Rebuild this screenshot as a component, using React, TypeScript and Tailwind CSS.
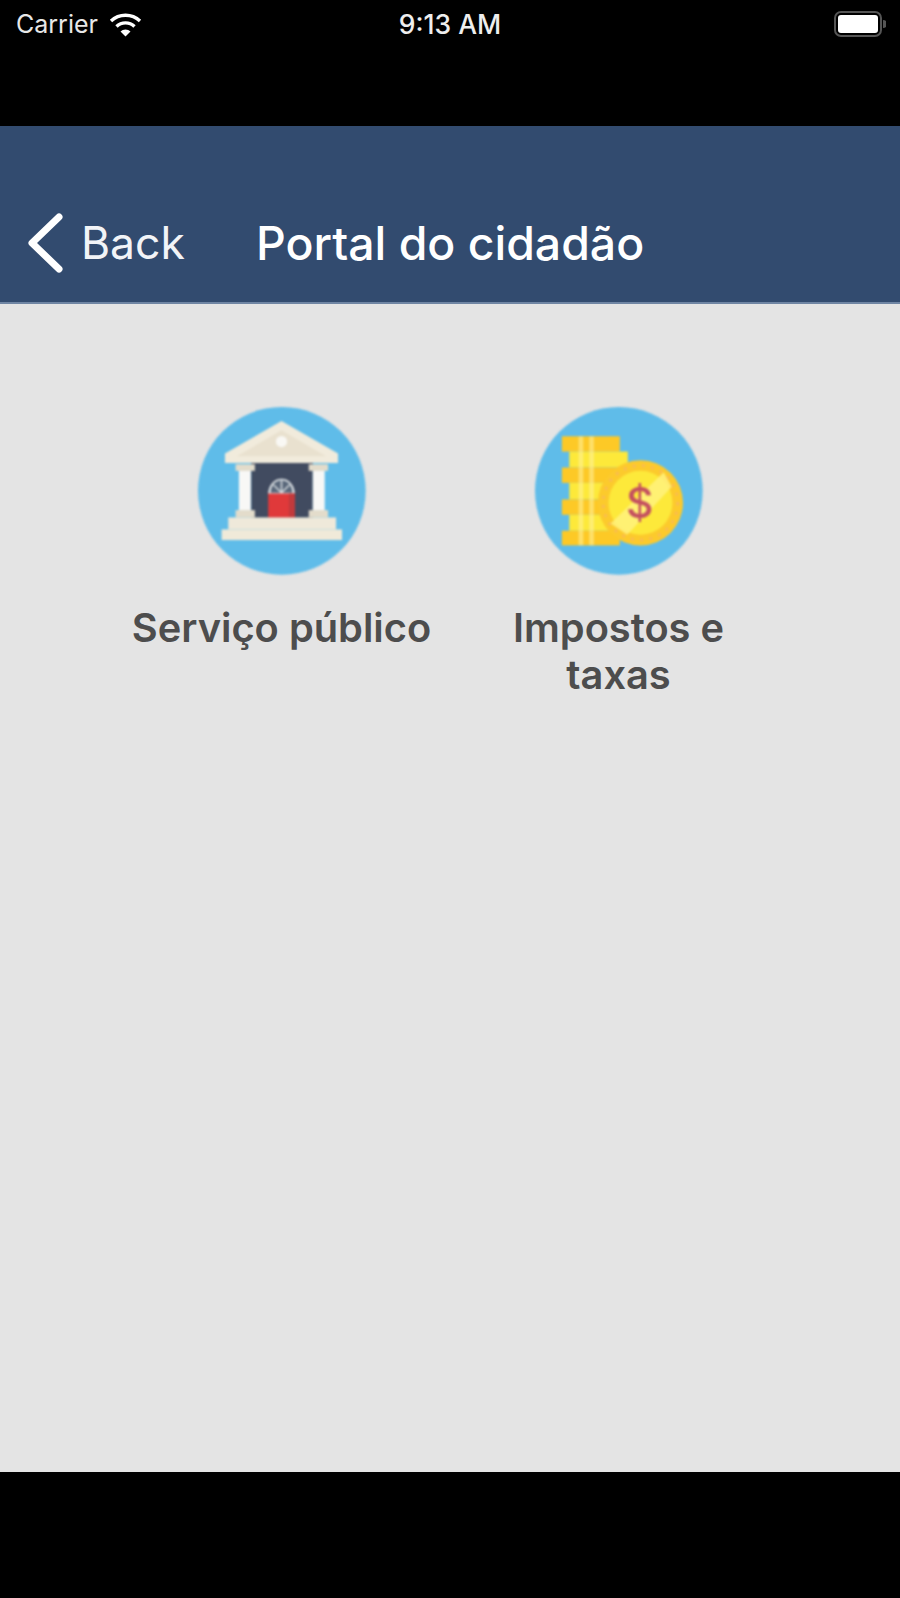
const BankIcon = () => (
  <svg viewBox="55 50 505 505" className="w-[168px] h-[168px] blur-[1px]">
    <circle cx="307" cy="302" r="252" fill="#5fbce9" />
    {/* wall and door */}
    <rect x="215" y="215" width="185" height="168" fill="#414b60" />
    <path d="M266 312 a40 46 0 0 1 80 0 Z" fill="#e3e8ea" />
    <path d="M273 308 a33 38 0 0 1 66 0 Z" fill="#59677a" />
    <path d="M306 270 v38 M306 308 L282 284 M306 308 L330 284" stroke="#e3e8ea" strokeWidth="4" />
    <rect x="266" y="310" width="80" height="73" fill="#e0393a" />
    <rect x="328" y="310" width="18" height="73" fill="#c23a3c" />
    {/* columns */}
    <rect x="178" y="240" width="36" height="122" fill="#f8f8f6" />
    <rect x="400" y="240" width="36" height="122" fill="#f8f8f6" />
    <rect x="168" y="222" width="58" height="20" fill="#e3dccb" />
    <rect x="388" y="222" width="58" height="20" fill="#e3dccb" />
    <rect x="168" y="360" width="58" height="22" fill="#e3dccb" />
    <rect x="388" y="360" width="58" height="22" fill="#e3dccb" />
    {/* roof */}
    <path d="M136 190 L306 92 L476 190 V218 H136 Z" fill="#f1ebdc" />
    <path d="M172 198 L306 120 L440 198 Z" fill="#e9e1cf" />
    <circle cx="306" cy="154" r="17" fill="#f9f8f4" />
    {/* steps */}
    <rect x="146" y="382" width="324" height="36" fill="#efe9da" />
    <rect x="126" y="418" width="362" height="32" fill="#f0ead9" />
  </svg>
)

const CoinsIcon = () => (
  <svg viewBox="45 50 505 505" className="w-[168px] h-[168px] blur-[1px]">
    <circle cx="297" cy="302" r="252" fill="#5fbce9" />
    {/* stack */}
    <rect x="126" y="138" width="174" height="46" fill="#fdc926" />
    <rect x="148" y="184" width="176" height="48" fill="#fde93a" />
    <rect x="126" y="232" width="174" height="46" fill="#fdc926" />
    <rect x="148" y="278" width="160" height="50" fill="#fde93a" />
    <rect x="126" y="328" width="174" height="46" fill="#fdc926" />
    <rect x="148" y="374" width="160" height="48" fill="#fde93a" />
    <rect x="126" y="422" width="174" height="44" fill="#fdc926" />
    <rect x="176" y="138" width="14" height="328" fill="#fff3a0" opacity="0.55" />
    <rect x="208" y="138" width="14" height="328" fill="#fff3a0" opacity="0.55" />
    {/* front coin */}
    <circle cx="362" cy="338" r="128" fill="#fcca2c" />
    <circle cx="362" cy="338" r="112" fill="none" stroke="#f9b95a" strokeWidth="8" strokeDasharray="8 20" />
    <circle cx="362" cy="338" r="96" fill="#fde93a" />
    <path d="M272 400 L432 246 L456 290 L322 434 Z" fill="#fff27e" opacity="0.85" />
    <text x="360" y="384" textAnchor="middle" fontFamily="Inter, sans-serif" fontWeight="500" fontSize="128" fill="#c4505f">$</text>
  </svg>
)

const Tile = ({ label, icon }: { label: string; icon: React.ReactNode }) => (
  <div className="w-[337px] px-[14px] flex flex-col items-center">
    {icon}
    <p className="mt-[29px] text-center text-[39.8px] leading-[47px] font-semibold text-[#4d4d4d]">{label}</p>
  </div>
)

export default function App() {
  return (
    <div className="w-full h-[1598px] flex flex-col bg-black font-['Inter',sans-serif]">
      {/* status bar */}
      <div className="h-[126px] px-4 pt-[8px] text-white">
        <div className="grid grid-cols-3 items-center h-[32px]">
          <div className="flex items-center gap-[11px]">
            <span className="text-[25px] leading-[32px] text-[#e8e8e8]">Carrier</span>
            <svg viewBox="0 0 33 25" className="w-[33px] h-[25px]" fill="none" stroke="#fff" strokeWidth="3.4">
              <path d="M2 9 a21 21 0 0 1 29 0" />
              <path d="M7.5 14.5 a13 13 0 0 1 18 0" />
              <path d="M16.5 24.5 L11.5 19.5 a7 7 0 0 1 10 0 Z" fill="#fff" stroke="none" />
            </svg>
          </div>
          <div className="text-center text-[26.5px] leading-[32px] font-medium text-[#eeeeee]">9:13 AM</div>
          <div className="flex justify-end">
            <svg viewBox="0 0 52 26" className="w-[52px] h-[26px] -mr-[2px]">
              <rect x="1" y="1" width="46" height="24" rx="6" fill="none" stroke="#555" strokeWidth="2" />
              <rect x="4" y="4" width="40" height="18" rx="3" fill="#fff" />
              <path d="M49 9 a4 4 0 0 1 0 8 Z" fill="#555" />
            </svg>
          </div>
        </div>
      </div>

      {/* nav bar */}
      <div className="h-[178px] bg-[#324b6f] border-b-2 border-[#6f85a3] flex items-end pb-[29px] text-white">
        <svg viewBox="0 0 36 60" className="ml-[27px] w-[36px] h-[60px] blur-[0.4px]" fill="none" stroke="#fff" strokeWidth="7" strokeLinecap="round" strokeLinejoin="round">
          <path d="M32 4 L5 30 L32 56" />
        </svg>
        <span className="ml-[18px] w-[175px] text-[44.5px] leading-[60px] font-normal text-[#f2f4f7]">Back</span>
        <span className="text-[46.4px] leading-[60px] font-[550]">Portal do cidadão</span>
      </div>

      {/* grid */}
      <div className="h-[1168px] bg-[#e4e4e4] pt-[103px] flex justify-center items-start">
        <Tile label="Serviço público" icon={<BankIcon />} />
        <Tile label="Impostos e taxas" icon={<CoinsIcon />} />
      </div>

      <div className="flex-1 bg-black" />
    </div>
  )
}
